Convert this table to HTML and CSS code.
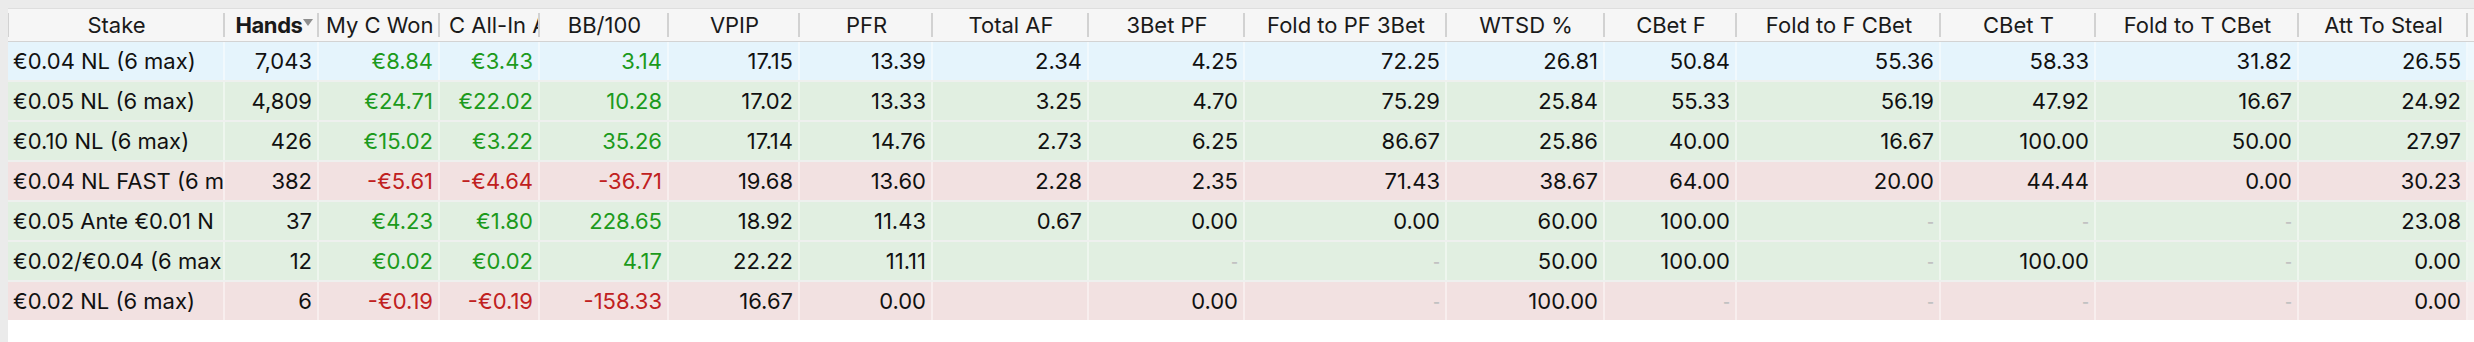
FILE: index.html
```html
<!DOCTYPE html>
<html>
<head>
<meta charset="utf-8">
<link rel="stylesheet" href="styles.css">
</head>
<body>
<div class="table">
  <div class="hrow">
    <div class="hc">Stake</div>
    <div class="hc sorted"><span class="b">Hands</span><svg class="arrow" width="10" height="7" viewBox="0 0 10 7"><path d="M0 0 H10 L5 7 Z" fill="#8e8e8e"/></svg></div>
    <div class="hc clip">My C Won</div>
    <div class="hc clip clip2">C All-In A</div>
    <div class="hc">BB/100</div>
    <div class="hc">VPIP</div>
    <div class="hc">PFR</div>
    <div class="hc">Total AF</div>
    <div class="hc">3Bet PF</div>
    <div class="hc">Fold to PF 3Bet</div>
    <div class="hc">WTSD %</div>
    <div class="hc">CBet F</div>
    <div class="hc">Fold to F CBet</div>
    <div class="hc">CBet T</div>
    <div class="hc">Fold to T CBet</div>
    <div class="hc">Att To Steal</div>
    <div class="hfill"></div>
  </div>

  <div class="row blue">
    <div class="c name">€0.04 NL (6 max)</div><div class="c">7,043</div><div class="c pos">€8.84</div><div class="c pos">€3.43</div><div class="c pos">3.14</div><div class="c">17.15</div><div class="c">13.39</div><div class="c">2.34</div><div class="c">4.25</div><div class="c">72.25</div><div class="c">26.81</div><div class="c">50.84</div><div class="c">55.36</div><div class="c">58.33</div><div class="c">31.82</div><div class="c">26.55</div><div class="fill"></div>
  </div>
  <div class="row green">
    <div class="c name">€0.05 NL (6 max)</div><div class="c">4,809</div><div class="c pos">€24.71</div><div class="c pos">€22.02</div><div class="c pos">10.28</div><div class="c">17.02</div><div class="c">13.33</div><div class="c">3.25</div><div class="c">4.70</div><div class="c">75.29</div><div class="c">25.84</div><div class="c">55.33</div><div class="c">56.19</div><div class="c">47.92</div><div class="c">16.67</div><div class="c">24.92</div><div class="fill"></div>
  </div>
  <div class="row green">
    <div class="c name">€0.10 NL (6 max)</div><div class="c">426</div><div class="c pos">€15.02</div><div class="c pos">€3.22</div><div class="c pos">35.26</div><div class="c">17.14</div><div class="c">14.76</div><div class="c">2.73</div><div class="c">6.25</div><div class="c">86.67</div><div class="c">25.86</div><div class="c">40.00</div><div class="c">16.67</div><div class="c">100.00</div><div class="c">50.00</div><div class="c">27.97</div><div class="fill"></div>
  </div>
  <div class="row red">
    <div class="c name">€0.04 NL FAST (6 m</div><div class="c">382</div><div class="c neg">-€5.61</div><div class="c neg">-€4.64</div><div class="c neg">-36.71</div><div class="c">19.68</div><div class="c">13.60</div><div class="c">2.28</div><div class="c">2.35</div><div class="c">71.43</div><div class="c">38.67</div><div class="c">64.00</div><div class="c">20.00</div><div class="c">44.44</div><div class="c">0.00</div><div class="c">30.23</div><div class="fill"></div>
  </div>
  <div class="row green">
    <div class="c name">€0.05 Ante €0.01 N</div><div class="c">37</div><div class="c pos">€4.23</div><div class="c pos">€1.80</div><div class="c pos">228.65</div><div class="c">18.92</div><div class="c">11.43</div><div class="c">0.67</div><div class="c">0.00</div><div class="c">0.00</div><div class="c">60.00</div><div class="c">100.00</div><div class="c dash">-</div><div class="c dash">-</div><div class="c dash">-</div><div class="c">23.08</div><div class="fill"></div>
  </div>
  <div class="row green">
    <div class="c name">€0.02/€0.04 (6 max</div><div class="c">12</div><div class="c pos">€0.02</div><div class="c pos">€0.02</div><div class="c pos">4.17</div><div class="c">22.22</div><div class="c">11.11</div><div class="c"></div><div class="c dash">-</div><div class="c dash">-</div><div class="c">50.00</div><div class="c">100.00</div><div class="c dash">-</div><div class="c">100.00</div><div class="c dash">-</div><div class="c">0.00</div><div class="fill"></div>
  </div>
  <div class="row red">
    <div class="c name">€0.02 NL (6 max)</div><div class="c">6</div><div class="c neg">-€0.19</div><div class="c neg">-€0.19</div><div class="c neg">-158.33</div><div class="c">16.67</div><div class="c">0.00</div><div class="c"></div><div class="c">0.00</div><div class="c dash">-</div><div class="c">100.00</div><div class="c dash">-</div><div class="c dash">-</div><div class="c dash">-</div><div class="c dash">-</div><div class="c">0.00</div><div class="fill"></div>
  </div>
</div>
</body>
</html>
```

FILE: styles.css
```css
html, body {
  margin: 0;
  padding: 0;
}
body {
  background: #ebebeb;
  width: 2474px;
  height: 342px;
  overflow: hidden;
  font-family: Inter, "Helvetica Neue", "Liberation Sans", sans-serif;
  font-size: 22px;
  color: #111;
}
.table {
  margin: 8px 0 0 8px;
  height: 334px;
  background: #ffffff;
  display: flex;
  flex-direction: column;
}
.hrow, .row {
  display: grid;
  grid-template-columns: 217px 94px 121px 100px 129px 131px 133px 156px 156px 202px 158px 132px 204px 155px 203px 169px 1fr;
}
.hrow {
  background: #f6f6f6;
  border-bottom: 1px solid #d3d3d3;
  border-top: 1px solid #dedede;
  box-sizing: content-box;
  height: 32px;
}
.hc {
  position: relative;
  display: flex;
  align-items: center;
  justify-content: center;
  white-space: nowrap;
  overflow: hidden;
  color: #1a1a1a;
}
.hc::after {
  content: "";
  position: absolute;
  right: 0;
  top: 4px;
  bottom: 4px;
  width: 2px;
  background: #d2d2d2;
}
.hc:first-child::before {
  content: "";
  position: absolute;
  left: 0;
  top: 4px;
  bottom: 4px;
  width: 1px;
  background: #d2d2d2;
}
.hc.clip {
  justify-content: flex-start;
  padding-left: 7px;
}
.hc.clip2 {
  padding-left: 9px;
}
.sorted {
  gap: 0;
  padding-left: 4px;
}
.b {
  font-weight: 700;
  letter-spacing: -0.4px;
}
.arrow {
  margin-top: -6px;
}
.row {
  height: 38px;
  border-top: 2px solid #eef0ee;
}
.hrow + .row {
  border-top: 0;
}
.blue { background: #e5f4fc; }
.green { background: #e1efe1; }
.red { background: #f2e1e1; }
.c {
  display: flex;
  align-items: center;
  justify-content: flex-end;
  padding: 0 5px 0 4px;
  border-right: 2px solid rgba(255, 255, 255, 0.45);
  white-space: nowrap;
  overflow: hidden;
  min-width: 0;
}
.c.name {
  justify-content: flex-start;
  padding-left: 5px;
  padding-right: 0;
}
.pos { color: #1c9a1c; }
.neg { color: #c02020; }
.dash {
  color: #c2c2c2;
  font-size: 15px;
  font-weight: 700;
}
.fill {
  background: rgba(255, 255, 255, 0.35);
}
```
